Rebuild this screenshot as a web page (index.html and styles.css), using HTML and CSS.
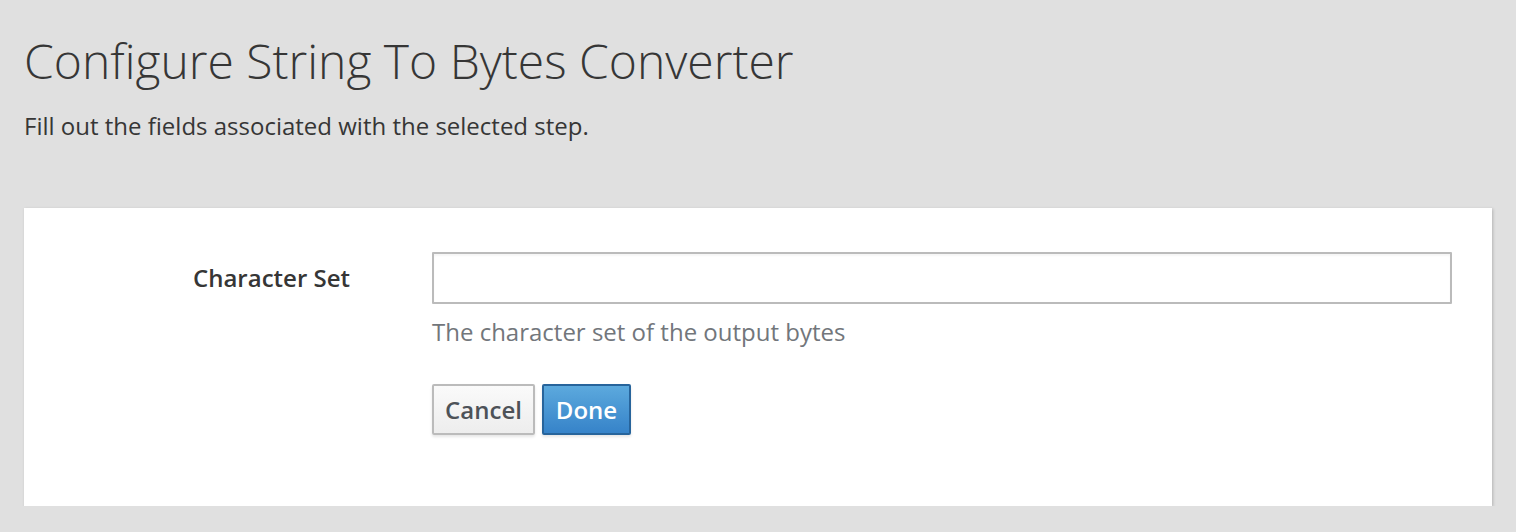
FILE: index.html
```html
<!DOCTYPE html>
<html>
<head>
<meta charset="utf-8">
<link rel="stylesheet" href="styles.css">
</head>
<body>
<div class="page">
  <header class="header">
    <h1 class="title">Configure String To Bytes Converter</h1>
    <p class="subtitle">Fill out the fields associated with the selected step.</p>
  </header>
  <section class="card">
    <form class="form">
      <label class="label" for="charset">Character Set</label>
      <div class="field">
        <input class="input" id="charset" type="text">
        <div class="help">The character set of the output bytes</div>
        <div class="actions">
          <button type="button" class="btn btn-default">Cancel</button>
          <button type="button" class="btn btn-primary">Done</button>
        </div>
      </div>
    </form>
  </section>
</div>
</body>
</html>
```
FILE: styles.css
```css
html, body {
  margin: 0;
  padding: 0;
  background: #e0e0e0;
  font-family: "Open Sans", "Noto Sans", sans-serif;
  color: #363636;
}
.page {
  padding: 0 24px;
}
.header {
  padding-top: 29px;
}
.title {
  margin: 0;
  font-weight: 300;
  font-size: 48px;
  line-height: 64px;
  color: #363636;
}
.subtitle {
  margin: 17px 0 0 0;
  font-size: 24px;
  line-height: 32px;
  color: #363636;
}
.card {
  margin-top: 66px;
  background: #fff;
  box-shadow: 1px 1px 3px rgba(0,0,0,0.2);
  height: 298px;
  box-sizing: border-box;
  padding: 44px 40px 0 0;
}
.form {
  display: grid;
  grid-template-columns: 326px 1fr;
  column-gap: 82px;
}
.label {
  text-align: right;
  font-weight: 600;
  font-size: 24px;
  line-height: 52px;
  color: #363636;
}
.field {
  display: flex;
  flex-direction: column;
  align-items: flex-start;
}
.input {
  width: 100%;
  height: 52px;
  box-sizing: border-box;
  border: 2px solid #bbb;
  border-radius: 1px;
  background: #fff;
  margin: 0;
  font: inherit;
  box-shadow: inset 0 2px 2px rgba(3,3,3,0.04);
}
.help {
  margin-top: 12px;
  font-size: 24px;
  line-height: 32px;
  color: #72767b;
}
.actions {
  display: flex;
  gap: 7px;
  margin-top: 36px;
}
.btn {
  height: 51px;
  box-sizing: border-box;
  padding: 0;
  font-family: "Open Sans", "Noto Sans", sans-serif;
  font-weight: 600;
  font-size: 24px;
  border-radius: 2px;
  border: 2px solid;
  box-shadow: 0 2px 3px rgba(3,3,3,0.1);
  cursor: pointer;
}
.btn-default {
  width: 103px;
  color: #4d5258;
  border-color: #bbb;
  background: linear-gradient(to bottom, #fafafa 0%, #ededed 100%);
}
.btn-primary {
  width: 89px;
  color: #fff;
  border-color: #27649b;
  background: linear-gradient(to bottom, #5ca9dd 0%, #3683c9 100%);
}
```
